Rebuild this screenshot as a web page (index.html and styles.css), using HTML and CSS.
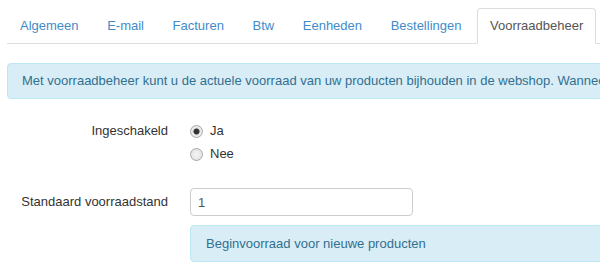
FILE: index.html
```html
<!DOCTYPE html>
<html lang="nl">
<head>
    <meta charset="UTF-8">
    <meta name="viewport" content="width=device-width, initial-scale=1.0">
    <title>Instellingen - Voorraadbeheer</title>
    <link rel="stylesheet" href="styles.css">
</head>
<body>

    <div class="page">
        <ul class="tabs">
            <li><a href="#">Algemeen</a></li>
            <li><a href="#">E-mail</a></li>
            <li><a href="#">Facturen</a></li>
            <li><a href="#">Btw</a></li>
            <li><a href="#">Eenheden</a></li>
            <li><a href="#">Bestellingen</a></li>
            <li class="active"><a href="#">Voorraadbeheer</a></li>
        </ul>

        <div class="alert">
            Met voorraadbeheer kunt u de actuele voorraad van uw producten bijhouden in de webshop. Wanneer een product niet meer op voorraad is, kan het niet meer besteld worden.
        </div>

        <form class="settings">
            <div class="row radio-row">
                <span class="row-label">Ingeschakeld</span>
                <div class="radios">
                    <label class="radio"><input type="radio" name="enabled" value="1" checked> Ja</label>
                    <label class="radio"><input type="radio" name="enabled" value="0"> Nee</label>
                </div>
            </div>

            <div class="row stock-row">
                <label class="row-label" for="stock">Standaard voorraadstand</label>
                <div class="control">
                    <input type="text" id="stock" name="stock" value="1">
                    <div class="help">Beginvoorraad voor nieuwe producten</div>
                </div>
            </div>
        </form>
    </div>

</body>
</html>
```

FILE: styles.css
```css
html {
    overflow: hidden;
}

body {
    margin: 0;
    font-family: "Liberation Sans", Arial, sans-serif;
    font-size: 13px;
    color: #333;
    background-color: #fff;
}

.page {
    width: 1000px;
    padding: 8px 0 0 7px;
}

/* tabs */
.tabs {
    display: flex;
    list-style: none;
    margin: 0;
    padding: 0;
    border-bottom: 1px solid #ddd;
}

.tabs li {
    margin: 0 2.6px -1px 0;
}

.tabs a {
    display: block;
    padding: 9px 12px;
    line-height: 16px;
    border: 1px solid transparent;
    border-radius: 4px 4px 0 0;
    color: #428bca;
    text-decoration: none;
}

.tabs .active a {
    color: #555;
    background-color: #fff;
    border-color: #ddd;
    border-bottom-color: transparent;
}

/* info box */
.alert {
    margin-top: 19px;
    padding: 8px 14px;
    line-height: 18px;
    white-space: nowrap;
    background-color: #d9edf7;
    border: 1px solid #bce8f1;
    border-radius: 4px;
    color: #31708f;
}

/* form */
.row {
    display: grid;
    grid-template-columns: 161px 1fr;
    column-gap: 22px;
}

.row-label {
    text-align: right;
    line-height: 18px;
}

.radio-row {
    margin-top: 23px;
}

.radios {
    display: flex;
    flex-direction: column;
    gap: 5px;
}

.radio {
    display: flex;
    align-items: center;
    gap: 7px;
    line-height: 18px;
}

.radio input {
    appearance: none;
    width: 13px;
    height: 13px;
    margin: 0;
    border: 1px solid #a8a8a8;
    border-radius: 50%;
    background: radial-gradient(circle, #f4f4f4 0, #dedede 100%);
}

.radio input:checked {
    background: radial-gradient(circle, #333 0, #333 2.5px, #e6e6e6 3.5px, #f2f2f2 100%);
}

.stock-row {
    margin-top: 25px;
}

.stock-row .row-label {
    line-height: 28px;
}

.control input {
    box-sizing: border-box;
    width: 223px;
    height: 28px;
    padding: 4px 7px;
    font-family: inherit;
    font-size: 13px;
    color: #555;
    border: 1px solid #ccc;
    border-radius: 4px;
}

.help {
    margin-top: 9px;
    padding: 9px 15px;
    line-height: 17px;
    background-color: #d9edf7;
    border: 1px solid #bce8f1;
    border-radius: 4px;
    color: #31708f;
}
```
